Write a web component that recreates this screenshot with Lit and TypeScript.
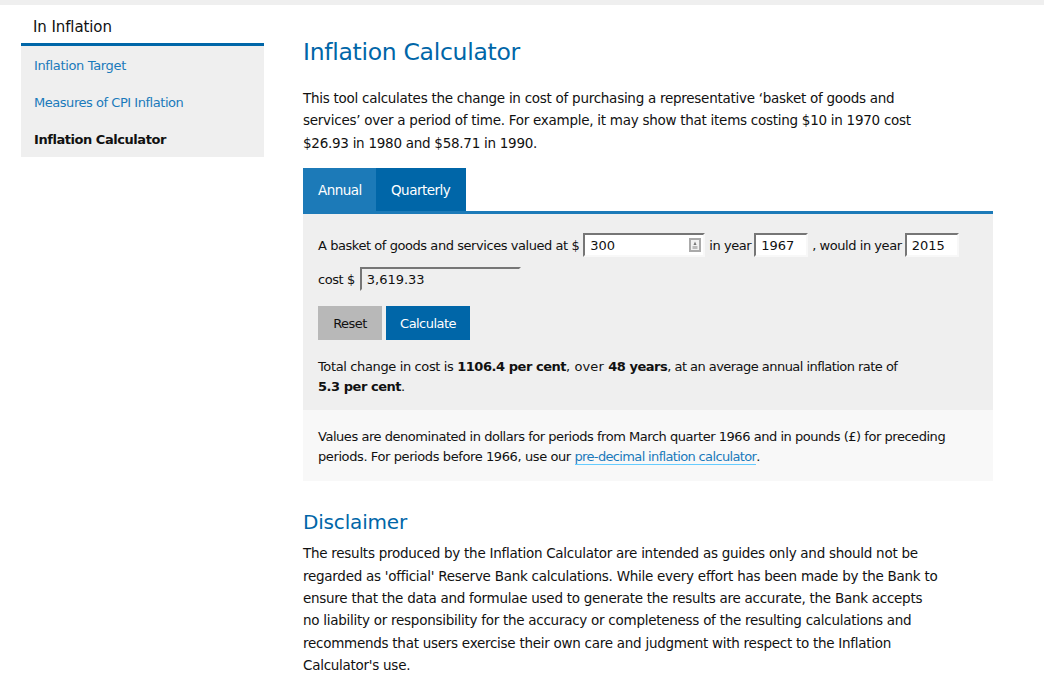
import { LitElement, html, css } from "lit";
import { customElement } from "lit/decorators.js";

@customElement("app-root")
export class AppRoot extends LitElement {
  static styles = css`
    :host { display: block; font-family: "DejaVu Sans", "Noto Sans", sans-serif; font-size: 13px; color: #111; background: #fff; height: 696px; overflow: hidden; }
    .top { height: 5px; background: #efefef; }
    .page { display: flex; padding-left: 21px; gap: 39px; align-items: flex-start; }
    .side { width: 243px; flex: none; }
    .side-title { height: 41px; box-sizing: border-box; padding: 13px 0 0 12px; font-size: 15px; line-height: 18px; border-bottom: 3px solid #0066a8; letter-spacing: -0.1px; }
    .side-list { background: #efefef; padding: 0 0 0 13px; height: 111px; display: flex; flex-direction: column; }
    .side-list a { height: 37px; line-height: 39px; color: #1a7abb; font-size: 13px; text-decoration: none; letter-spacing: -0.46px; }
    .side-list a:first-child { letter-spacing: -0.35px; }
    .side-list a.cur { color: #111; font-weight: 700; letter-spacing: -0.45px; }
    .main { width: 690px; flex: none; }
    h1 { margin: 31px 0 0; font-size: 23.5px; font-weight: 400; line-height: 32px; color: #0066a8; letter-spacing: -0.3px; }
    p { margin: 0; line-height: 20px; letter-spacing: -0.46px; }
    .intro, .disc { width: 637px; font-size: 13.5px; line-height: 22.4px; letter-spacing: -0.27px; }
    .intro { margin-top: 19px; }
    .tabs { display: flex; margin-top: 14px; height: 46px; box-sizing: border-box; border-bottom: 3px solid #1c7ab8; }
    .tab { color: #fff; line-height: 45px; padding: 0 15px; font-size: 13.5px; letter-spacing: -0.52px; background: #1c7ab8; width: 73px; box-sizing: border-box; }
    .tab.q { background: #0066a8; width: 90px; }
    .panel { background: #efefef; padding: 19px 15px 0; height: 177px; }
    .row { display: flex; align-items: flex-start; height: 24px; line-height: 26px; white-space: pre; letter-spacing: -0.44px; }
    .row + .row { margin-top: 10px; }
    .field { box-sizing: border-box; height: 24px; line-height: 18px; background: #fff; border: 2px solid; border-color: #767676 #f8f8f8 #f8f8f8 #767676; padding: 2px 0 0 5px; display: flex; align-items: center; justify-content: space-between; letter-spacing: 0; font-size: 13px; }
    .f-amt { width: 122px; margin: 0 4px; padding-right: 2px; }
    .f-y1 { width: 54px; margin: 0 4px 0 3px; }
    .f-y2 { width: 54px; margin-left: 3px; }
    .f-cost { width: 161px; margin-left: 5px; background: #efefef; border-color: #767676 #efefef #efefef #767676; }
    .spin { display: block; width: 12px; height: 14px; margin-top: -3px; }
    .buttons { display: flex; gap: 4px; margin-top: 15px; }
    .btn { height: 34px; line-height: 36px; box-sizing: border-box; text-align: center; font-size: 13px; letter-spacing: -0.55px; }
    .reset { background: #b8b8b8; width: 64px; }
    .calc { background: #0066a8; color: #fff; width: 84px; }
    .result { margin-top: 17px; letter-spacing: -0.37px; }
    .result b { letter-spacing: -0.46px; }
    .over { letter-spacing: 0.1px; }
    .tail { letter-spacing: -0.54px; }
    .note { background: #f8f8f8; height: 71px; box-sizing: border-box; padding: 17px 15px 0; }
    .note a { color: #1a7abb; text-decoration: none; border-bottom: 1px solid #66ccff; letter-spacing: -0.65px; }
    .lead { letter-spacing: -0.4px; }
    h2 { margin: 25px 0 0; font-size: 20px; font-weight: 400; line-height: 32px; color: #0066a8; letter-spacing: -0.17px; }
    .disc { margin-top: 4px; }
  `;

  render() {
    return html`
      <div class="top"></div>
      <div class="page">
        <aside class="side">
          <div class="side-title">In Inflation</div>
          <nav class="side-list">
            <a>Inflation Target</a>
            <a>Measures of CPI Inflation</a>
            <a class="cur">Inflation Calculator</a>
          </nav>
        </aside>
        <main class="main">
          <h1>Inflation Calculator</h1>
          <p class="intro">This tool calculates the change in cost of purchasing a representative ‘basket of goods and services’ over a period of time. For example, it may show that items costing $10 in 1970 cost $26.93 in 1980 and $58.71 in 1990.</p>
          <div class="tabs"><div class="tab">Annual</div><div class="tab q">Quarterly</div></div>
          <div class="panel">
            <div class="row">A basket of goods and services valued at $<span class="field f-amt"><span>300</span><svg class="spin" viewBox="0 0 12 14"><rect x="1" y="1" width="10" height="12" fill="#f2f2f2" stroke="#aaa" stroke-width="2"/><path d="M6 3.5 L7.5 7 H4.5 Z" fill="#777"/><rect x="3.5" y="8" width="5" height="3" fill="#bbb"/></svg></span>in year<span class="field f-y1">1967</span>, would in year<span class="field f-y2">2015</span></div>
            <div class="row">cost $<span class="field f-cost">3,619.33</span></div>
            <div class="buttons"><div class="btn reset">Reset</div><div class="btn calc">Calculate</div></div>
            <p class="result">Total change in cost is <b>1106.4 per cent</b><span class="over">, over </span><b>48 years</b><span class="tail">, at an average annual inflation rate of</span><br><b>5.3 per cent</b>.</p>
          </div>
          <div class="note">
            <p>Values are denominated in dollars for periods from March quarter 1966 and in pounds (£) for preceding <span class="lead">periods. For periods before 1966, use our</span> <a>pre-decimal inflation calculator</a>.</p>
          </div>
          <h2>Disclaimer</h2>
          <p class="disc">The results produced by the Inflation Calculator are intended as guides only and should not be regarded as 'official' Reserve Bank calculations. While every effort has been made by the Bank to ensure that the data and formulae used to generate the results are accurate, the Bank accepts no liability or responsibility for the accuracy or completeness of the resulting calculations and recommends that users exercise their own care and judgment with respect to the Inflation Calculator's use.</p>
        </main>
      </div>
    `;
  }
}
